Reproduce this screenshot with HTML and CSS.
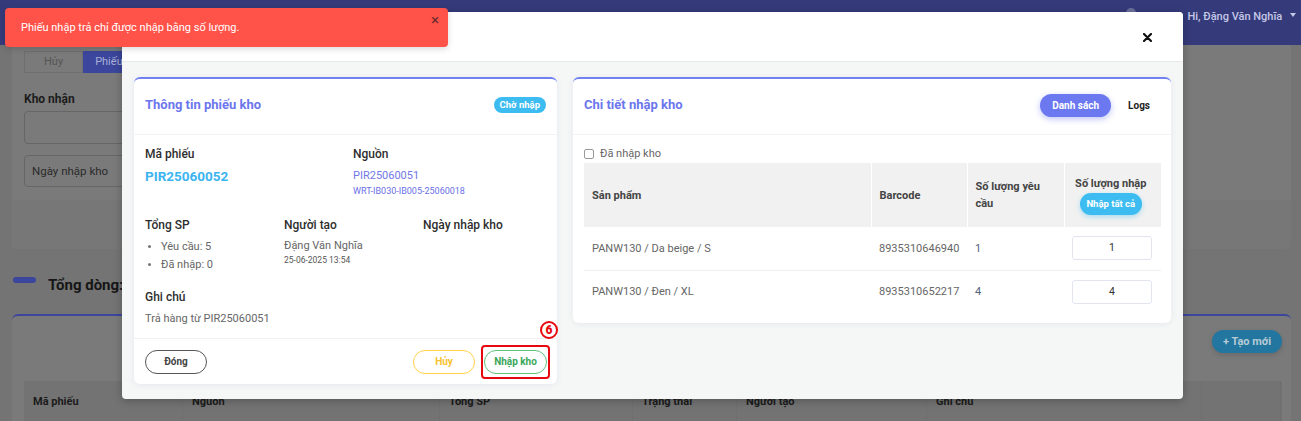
FILE: index.html
```html
<!DOCTYPE html>
<html lang="vi">
<head>
<meta charset="utf-8">
<title>Phiếu nhập kho</title>
<link rel="stylesheet" href="styles.css">
</head>
<body>
<div class="app">
  <header class="nav">
    <div class="nav-bell"></div>
    <div class="nav-user">Hi, Đặng Văn Nghĩa <span class="caret"></span></div>
  </header>
  <main class="content">
    <section class="filter-card">
      <div class="tabs">
        <span class="tab">Hủy</span>
        <span class="tab tab-active">Phiếu nhập trả</span>
      </div>
      <div class="bg-label">Kho nhận</div>
      <div class="bg-input"></div>
      <div class="bg-input bg-input2">Ngày nhập kho</div>
      <div class="filter-foot"></div>
    </section>
    <div class="total-row">
      <span class="total-pill"></span>
      <span class="total-text">Tổng dòng:</span>
    </div>
    <section class="list-card">
      <div class="list-toolbar">
        <span class="create-btn">+ Tạo mới</span>
      </div>
      <div class="bg-table-head">
        <span>Mã phiếu</span>
        <span>Nguồn</span>
        <span>Tổng SP</span>
        <span>Trạng thái</span>
        <span>Người tạo</span>
        <span>Ghi chú</span>
        <span></span>
      </div>
    </section>
  </main>
</div>

<div class="modal">
  <div class="modal-head">
    <button class="modal-close" aria-label="Đóng">
      <svg width="9" height="9" viewBox="0 0 9 9"><path d="M1 1L8 8M8 1L1 8" stroke="#111" stroke-width="2.2" stroke-linecap="round"/></svg>
    </button>
  </div>
  <div class="modal-body">
    <section class="card card-info">
      <div class="card-head">
        <h2 class="card-title">Thông tin phiếu kho</h2>
        <span class="badge">Chờ nhập</span>
      </div>
      <div class="card-body">
        <div class="grid-2">
          <div>
            <div class="field-label">Mã phiếu</div>
            <div class="code">PIR25060052</div>
          </div>
          <div>
            <div class="field-label">Nguồn</div>
            <div class="src-link">PIR25060051</div>
            <div class="src-sub">WRT-IB030-IB005-25060018</div>
          </div>
        </div>
        <div class="grid-3">
          <div>
            <div class="field-label">Tổng SP</div>
            <ul class="qty-list">
              <li>Yêu cầu: 5</li>
              <li>Đã nhập: 0</li>
            </ul>
          </div>
          <div>
            <div class="field-label">Người tạo</div>
            <div class="creator">Đặng Văn Nghĩa</div>
            <div class="created-at">25-06-2025 13:54</div>
          </div>
          <div>
            <div class="field-label">Ngày nhập kho</div>
          </div>
        </div>
        <div class="note-block">
          <div class="field-label">Ghi chú</div>
          <div class="note">Trả hàng từ PIR25060051</div>
        </div>
      </div>
      <div class="card-foot">
        <button class="btn btn-close">Đóng</button>
        <div class="foot-actions">
          <button class="btn btn-cancel">Hủy</button>
          <div class="mark-wrap">
            <button class="btn btn-import">Nhập kho</button>
            <span class="mark-box"></span>
            <span class="mark-num">6</span>
          </div>
        </div>
      </div>
    </section>

    <section class="card card-detail">
      <div class="card-head">
        <h2 class="card-title">Chi tiết nhập kho</h2>
        <div class="seg">
          <span class="seg-item seg-active">Danh sách</span>
          <span class="seg-item">Logs</span>
        </div>
      </div>
      <div class="card-body detail-body">
        <label class="check-row"><span class="checkbox"></span>Đã nhập kho</label>
        <table class="items">
          <colgroup>
            <col class="c1"><col class="c2"><col class="c3"><col class="c4">
          </colgroup>
          <thead>
            <tr>
              <th>Sản phẩm</th>
              <th>Barcode</th>
              <th>Số lượng yêu cầu</th>
              <th class="th-qty">Số lượng nhập<br><span class="fill-all">Nhập tất cả</span></th>
            </tr>
          </thead>
          <tbody>
            <tr>
              <td>PANW130 / Da beige / S</td>
              <td>8935310646940</td>
              <td class="req">1</td>
              <td><span class="qty-input">1</span></td>
            </tr>
            <tr>
              <td>PANW130 / Đen / XL</td>
              <td>8935310652217</td>
              <td class="req">4</td>
              <td><span class="qty-input">4</span></td>
            </tr>
          </tbody>
        </table>
      </div>
    </section>
  </div>
</div>

<div class="toast">
  <span class="toast-text">Phiếu nhập trả chỉ được nhập bằng số lượng.</span>
  <span class="toast-close">×</span>
</div>
</body>
</html>
```

FILE: styles.css
```css
* { box-sizing: border-box; }
html, body { margin: 0; padding: 0; }
body {
  width: 1301px;
  height: 421px;
  overflow: hidden;
  position: relative;
  background: #747474;
  font-family: Roboto, "Open Sans", sans-serif;
  color: #333;
}

/* ---------- background app (dimmed) ---------- */
.app { height: 421px; overflow: hidden; }
.nav {
  height: 45px;
  background: #353b7a;
  display: flex;
  justify-content: flex-end;
  align-items: flex-start;
  padding: 8px 5px 0 0;
  gap: 52px;
}
.nav-bell {
  width: 10px; height: 10px;
  border-radius: 50% 50% 2px 2px;
  background: #6d719c;
}
.nav-user {
  color: #c4c7e6;
  font-size: 11px;
  font-weight: 500;
  line-height: 18px;
}
.caret {
  display: inline-block;
  width: 0; height: 0;
  border-left: 3px solid transparent;
  border-right: 3px solid transparent;
  border-top: 4px solid #c4c7e6;
  margin-left: 5px;
  vertical-align: 3px;
}
.content { padding: 0 10px 0 12px; }
.filter-card {
  height: 204px;
  background: #7a7a7a;
  border-radius: 0 0 5px 5px;
  padding: 6px 12px 0;
}
.tabs { display: flex; height: 22px; }
.tab {
  font-size: 11px;
  line-height: 20px;
  padding: 0 19px;
  color: #555;
  border: 1px solid #6f6f6f;
}
.tab-active {
  background: #3b469c;
  border-color: #3b469c;
  color: #a9aed6;
  padding: 0 11px;
}
.bg-label {
  margin-top: 18px;
  font-size: 12px;
  font-weight: 700;
  line-height: 16px;
  color: #1c1c1c;
}
.bg-input {
  margin-top: 4px;
  width: 400px;
  height: 33px;
  border: 1px solid #666;
  border-radius: 4px;
  font-size: 11.5px;
  color: #2a2a2a;
  padding: 0 7px;
  line-height: 30px;
}
.bg-input2 { margin-top: 11px; height: 32px; }
.filter-foot {
  margin: 13px -12px 0;
  height: 49px;
  background: #777;
  border-radius: 0 0 5px 5px;
}
.total-row {
  margin-top: 28px;
  height: 16px;
  display: flex;
  align-items: flex-start;
  gap: 12px;
  padding-left: 1px;
}
.total-pill {
  width: 23px; height: 6px;
  border-radius: 3px;
  background: #3b469c;
}
.total-text {
  font-size: 15px;
  font-weight: 700;
  line-height: 16px;
  color: #161616;
}
.list-card {
  margin-top: 21px;
  height: 140px;
  background: #7a7a7a;
  border-top: 2px solid #3b469c;
  border-radius: 6px 6px 0 0;
  padding: 14px 9px 0 12px;
}
.list-toolbar {
  display: flex;
  justify-content: flex-end;
  height: 23px;
}
.create-btn {
  width: 70px;
  height: 23px;
  border-radius: 12px;
  background: #23769f;
  color: #b6cbd6;
  font-size: 11px;
  font-weight: 700;
  line-height: 23px;
  text-align: center;
  box-shadow: 0 2px 5px rgba(0,0,0,.15);
}
.bg-table-head {
  margin-top: 28px;
  height: 40px;
  background: #737373;
  display: grid;
  grid-template-columns: 159px 257px 193px 104px 190px 275px 79px;
}
.bg-table-head span {
  font-size: 11px;
  font-weight: 700;
  color: #1b1b1b;
  padding: 14px 9px 0;
  border-right: 1px solid #6f6f6f;
}

/* ---------- modal ---------- */
.modal {
  position: absolute;
  left: 122px;
  top: 12px;
  width: 1061px;
  height: 387px;
  background: #f5f7f7;
  border-radius: 4px;
  box-shadow: 0 2px 8px rgba(0,0,0,.25);
  overflow: hidden;
}
.modal-head {
  height: 50px;
  background: #fff;
  border-bottom: 1px solid #e6e8ea;
  display: flex;
  justify-content: flex-end;
  align-items: center;
  padding-right: 31px;
}
.modal-close {
  border: 0;
  background: none;
  padding: 0;
  width: 9px; height: 9px;
  display: flex;
  margin-top: 1px;
}
.modal-body {
  display: flex;
  align-items: flex-start;
  gap: 16px;
  padding: 15px 12px 16px;
}
.card {
  background: #fff;
  border-top: 2px solid #7380f0;
  border-radius: 6px;
  box-shadow: 0 1px 6px rgba(40,50,80,.08);
}
.card-info { width: 423px; }
.card-detail { width: 598px; }
.card-head {
  height: 56px;
  border-bottom: 1px solid #f2f3f5;
  display: flex;
  align-items: center;
  justify-content: space-between;
  padding: 0 11px 3px;
}
.card-title {
  margin: 0;
  font-size: 13px;
  font-weight: 700;
  line-height: 18px;
  color: #6b76ee;
}
.badge {
  background: #3cbcf0;
  color: #fff;
  font-size: 9.5px;
  font-weight: 700;
  line-height: 16px;
  padding: 0 6px;
  border-radius: 8px;
}
.card-body { padding: 11px 11px 11px; }
.grid-2 { display: grid; grid-template-columns: 208px 1fr; }
.grid-3 { display: grid; grid-template-columns: 139px 139px 1fr; margin-top: 19px; }
.field-label {
  font-size: 12px;
  font-weight: 500;
  line-height: 16px;
  color: #2e2e2e;
}
.code {
  margin-top: 5px;
  font-size: 13.5px;
  font-weight: 700;
  line-height: 18px;
  color: #3cb4f0;
}
.src-link {
  margin-top: 6px;
  font-size: 11px;
  line-height: 16px;
  color: #7177e8;
}
.src-sub {
  font-size: 9px;
  line-height: 14px;
  color: #6a70e6;
}
.qty-list {
  margin: 5px 0 0;
  padding: 0 0 0 16px;
  font-size: 11px;
  line-height: 18px;
  color: #666;
}
.qty-list li::marker { color: #777; font-size: 10px; }
.creator {
  margin-top: 5px;
  font-size: 11px;
  line-height: 16px;
  color: #666;
}
.created-at {
  font-size: 8.5px;
  line-height: 12px;
  color: #555;
}
.note-block { margin-top: 15px; }
.note {
  margin-top: 6px;
  font-size: 11px;
  line-height: 16px;
  color: #666;
}
.card-foot {
  height: 46px;
  border-top: 1px solid #f0f1f3;
  display: flex;
  align-items: center;
  justify-content: space-between;
  padding: 0 10px 0 11px;
}
.foot-actions { display: flex; gap: 9px; align-items: center; }
.btn {
  height: 24px;
  width: 62px;
  border-radius: 12px;
  background: #fff;
  font-family: inherit;
  font-size: 10px;
  font-weight: 700;
  padding: 0;
  cursor: pointer;
}
.btn-close { border: 1px solid #555; color: #444; }
.btn-cancel { border: 1px solid #ffd04a; color: #f7c12f; }
.btn-import { border: 1px solid #5fc37a; color: #3aa65a; width: 63px; display: block; }
.mark-wrap { position: relative; }
.mark-box {
  position: absolute;
  left: -3px; top: -5px; right: -3px; bottom: -5px;
  border: 2px solid #e8080f;
  border-radius: 4px;
  pointer-events: none;
}
.mark-num {
  position: absolute;
  right: -11px;
  top: -29px;
  width: 18px; height: 18px;
  border: 2px solid #e8080f;
  border-radius: 50%;
  color: #e8080f;
  font-size: 12px;
  font-weight: 900;
  line-height: 14px;
  text-align: center;
}

/* detail */
.seg { display: flex; align-items: center; gap: 7px; }
.seg-item {
  font-size: 10px;
  font-weight: 700;
  color: #222;
  line-height: 23px;
  padding: 0 10px;
  border-radius: 12px;
}
.seg-active {
  background: #6b78f0;
  color: #fff;
  padding: 0 12px;
  box-shadow: 0 2px 6px rgba(107,120,240,.45);
}
.detail-body { padding: 11px 10px 10px 11px; }
.check-row {
  display: flex;
  align-items: center;
  gap: 6px;
  font-size: 11px;
  line-height: 16px;
  color: #666;
}
.checkbox {
  width: 10px; height: 10px;
  border: 1px solid #9a9a9a;
  border-radius: 2px;
  background: #fff;
}
.items {
  margin-top: 1px;
  width: 577px;
  border-collapse: collapse;
  table-layout: fixed;
}
.c1 { width: 287px; }
.c2 { width: 96px; }
.c3 { width: 97px; }
.c4 { width: 97px; }
.items th {
  height: 64px;
  background: #f1f1f1;
  border-right: 1px solid #fff;
  text-align: left;
  font-size: 11px;
  font-weight: 700;
  line-height: 17px;
  color: #444;
  padding: 0 8px;
  vertical-align: middle;
}
.items th:last-child { border-right: 0; }
.items th.th-qty { text-align: center; padding: 0 12px 0 8px; }
.fill-all {
  display: inline-block;
  margin-top: 1px;
  width: 62px;
  height: 22px;
  line-height: 22px;
  border-radius: 11px;
  background: #3cbcf0;
  color: #fff;
  font-size: 9.5px;
  font-weight: 700;
  box-shadow: 0 2px 5px rgba(60,188,240,.4);
}
.items td {
  height: 43px;
  font-size: 11px;
  color: #666;
  padding: 0 8px;
  border-bottom: 1px solid #eeeff2;
}
.items tbody tr:last-child td { border-bottom: 0; }
.items td.req { color: #52617c; }
.qty-input {
  display: block;
  width: 80px;
  height: 24px;
  border: 1px solid #e2e5ef;
  border-radius: 3px;
  text-align: center;
  font-size: 10.5px;
  line-height: 22px;
  color: #333;
}

/* toast */
.toast {
  position: absolute;
  left: 5px;
  top: 8px;
  width: 443px;
  height: 39px;
  background: #ff534a;
  border-radius: 4px;
  box-shadow: 0 2px 6px rgba(0,0,0,.15);
  display: flex;
  align-items: center;
  justify-content: space-between;
  padding: 0 9px 0 16px;
}
.toast-text {
  color: #fff;
  font-size: 11px;
  margin-top: -1px;
}
.toast-close {
  color: #6d2a2a;
  font-size: 15px;
  line-height: 15px;
  align-self: flex-start;
  margin-top: 5px;
}
```
